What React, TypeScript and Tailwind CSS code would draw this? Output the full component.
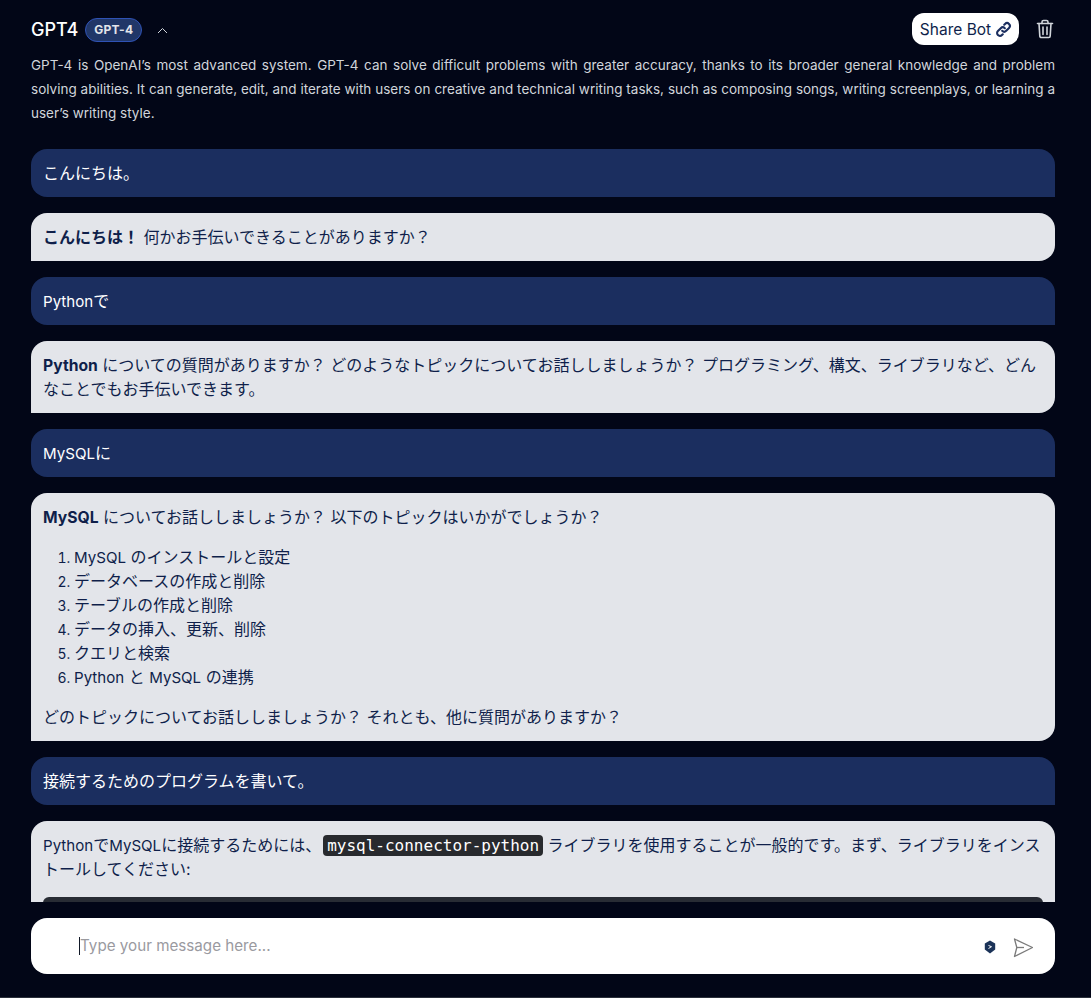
import React from "react";

function User({ children }: { children: React.ReactNode }) {
  return <div className="rounded-t-2xl rounded-bl-2xl bg-[#1b2e5f] px-3 py-3 text-base leading-6 text-white">{children}</div>;
}
function Bot({ children }: { children: React.ReactNode }) {
  return <div className="rounded-t-2xl rounded-br-2xl bg-[#e3e5ea] px-3 py-3 text-base leading-6 text-[#0f1f4a]">{children}</div>;
}
function L({ children }: { children: React.ReactNode }) {
  return <span className="text-[15.1px] leading-none">{children}</span>;
}
function B({ children }: { children: React.ReactNode }) {
  return <b className="text-[15.7px] leading-none font-bold">{children}</b>;
}

export default function App() {
  return (
    <div className="flex h-[998px] w-full flex-col overflow-hidden border-b border-[#2b303b] bg-[#020617] pl-[31px] pr-[36px] font-['Inter','Noto_Sans_CJK_JP',sans-serif]">
      <div className="flex h-[53px] shrink-0 items-start justify-between pt-[13px]">
        <div className="mt-px flex h-8 items-center">
          <span className="text-lg font-medium text-white">GPT4</span>
          <span className="ml-[7px] rounded-full border border-[#2f52b5] bg-[#213768] px-2 text-xs leading-[22px] font-bold tracking-[0.2px] text-[#e3e5ea]">GPT-4</span>
          <svg className="ml-[15px]" width="11" height="7" viewBox="0 0 11 7" fill="none" stroke="#d1d5db" strokeWidth="1"><path d="M1 6 L5.5 1.5 L10 6" /></svg>
        </div>
        <div className="flex items-center">
          <button className="flex h-8 w-[107px] items-center justify-center gap-1 rounded-xl bg-white pl-px pt-px text-[15.5px] text-[#0f1f4a]">
            Share Bot
            <svg width="17" height="17" viewBox="0 0 24 24" fill="none" stroke="#1b2e5f" strokeWidth="3" strokeLinecap="round" strokeLinejoin="round"><path d="M13.828 10.172a4 4 0 0 0-5.656 0l-4 4a4 4 0 1 0 5.656 5.656l1.102-1.101m-.758-4.899a4 4 0 0 0 5.656 0l4-4a4 4 0 0 0-5.656-5.656l-1.1 1.1" /></svg>
          </button>
          <svg className="ml-[17px] mr-[1px]" width="18" height="20" viewBox="0 0 18 20" fill="none" stroke="#d1d5db" strokeWidth="1.6" strokeLinecap="round" strokeLinejoin="round"><path d="M1.5 4.5h15" /><path d="M6 4.5V3a1.5 1.5 0 0 1 1.5-1.5h3A1.5 1.5 0 0 1 12 3v1.5" /><path d="M3 4.5l.8 12.5a1.5 1.5 0 0 0 1.5 1.5h7.4a1.5 1.5 0 0 0 1.5-1.5L15 4.5" /><path d="M7 8v7.5M11 8v7.5" /></svg>
        </div>
      </div>
      <p className="h-[84px] shrink-0 text-justify text-[13.5px] leading-6 text-[#d1d5db]">
        GPT-4 is OpenAI’s most advanced system. GPT-4 can solve difficult problems with greater accuracy, thanks to its broader general knowledge and problem solving abilities. It can generate, edit, and iterate with users on creative and technical writing tasks, such as composing songs, writing screenplays, or learning a user’s writing style.
      </p>
      <div className="flex h-[765px] shrink-0 flex-col gap-4 overflow-hidden pt-[12px] [&>div]:shrink-0">
        <User>こんにちは。</User>
        <Bot><b className="font-bold">こんにちは！</b> 何かお手伝いできることがありますか？</Bot>
        <User><L>Python</L>で</User>
        <Bot><B>Python</B> についての質問がありますか？ どのようなトピックについてお話ししましょうか？ プログラミング、構文、ライブラリなど、どんなことでもお手伝いできます。</Bot>
        <User><L>MySQL</L>に</User>
        <Bot>
          <p><B>MySQL</B> についてお話ししましょうか？ 以下のトピックはいかがでしょうか？</p>
          <ol className="my-4 list-decimal pl-[31px] marker:text-[14px]">
            <li><L>MySQL</L> のインストールと設定</li>
            <li>データベースの作成と削除</li>
            <li>テーブルの作成と削除</li>
            <li>データの挿入、更新、削除</li>
            <li>クエリと検索</li>
            <li><L>Python</L> と <L>MySQL</L> の連携</li>
          </ol>
          <p>どのトピックについてお話ししましょうか？ それとも、他に質問がありますか？</p>
        </Bot>
        <User>接続するためのプログラムを書いて。</User>
        <Bot>
          <p><L>Python</L>で<L>MySQL</L>に接続するためには、<code className="ml-0.5 rounded-[4px] bg-[#282a2e] px-1 py-[1px] font-['DejaVu_Sans_Mono',monospace] text-base leading-none font-medium text-white">mysql-connector-python</code> ライブラリを使用することが一般的です。まず、ライブラリをインストールしてください:</p>
          <div className="mt-[16px] h-24 rounded-md bg-[#282c34]" />
        </Bot>
      </div>
      <div className="mt-4 flex h-14 shrink-0 items-center rounded-2xl bg-white pl-12 pr-[22px]">
        <span className="h-[18px] w-px bg-[#111827]" />
        <span className="flex-1 pt-[1px] text-[15.2px] text-[#9a9a9f]">Type your message here...</span>
        <svg width="12" height="14" viewBox="0 0 12 14" className="mr-[17px] mt-[1px]"><path d="M6 .5l5.2 3v6L6 13.5.8 9.5v-6z" fill="#1b3358" /><path d="M4.5 5.5l3 1.2-3 1.8" stroke="#fff" strokeWidth="1" fill="none" /></svg>
        <svg className="mt-[3px]" width="20" height="20" viewBox="0 0 20 20" fill="none" stroke="#7b7b7b" strokeWidth="1.3" strokeLinejoin="round"><path d="M1.5 1 L19.5 9.5 L1.5 18.5 L3.8 9.5 Z" /><path d="M3.8 9.5H11" /></svg>
      </div>
    </div>
  );
}
